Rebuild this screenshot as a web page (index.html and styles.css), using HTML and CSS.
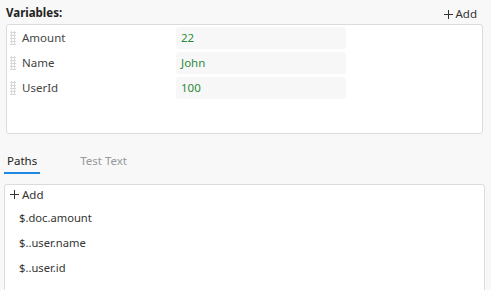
FILE: index.html
```html
<!DOCTYPE html>
<html>
<head>
<meta charset="utf-8">
<link rel="stylesheet" href="styles.css">
</head>
<body>
<div class="page">
  <div class="var-head">
    <span class="title">Variables:</span>
    <span class="add"><svg class="plus" viewBox="0 0 10 10" width="9" height="9"><path d="M5 0V10M0 5H10" stroke="#333" stroke-width="1.1" fill="none"/></svg>Add</span>
  </div>
  <div class="var-box">
    <div class="row">
      <span class="grip"></span>
      <span class="name">Amount</span>
      <span class="val">22</span>
    </div>
    <div class="row">
      <span class="grip"></span>
      <span class="name">Name</span>
      <span class="val">John</span>
    </div>
    <div class="row">
      <span class="grip"></span>
      <span class="name">UserId</span>
      <span class="val">100</span>
    </div>
  </div>
  <div class="tabs">
    <span class="tab active">Paths</span>
    <span class="tab">Test Text</span>
  </div>
  <div class="paths-box">
    <span class="add left"><svg class="plus" viewBox="0 0 10 10" width="9" height="9"><path d="M5 0V10M0 5H10" stroke="#333" stroke-width="1.1" fill="none"/></svg>Add</span>
    <div class="path first">$.doc.amount</div>
    <div class="path">$..user.name</div>
    <div class="path">$..user.id</div>
  </div>
</div>
</body>
</html>
```
FILE: styles.css
```css
html, body {
  margin: 0;
  padding: 0;
  background: #f8f8f8;
  height: 100%;
  overflow: hidden;
}
body {
  font-family: "Noto Sans", "Open Sans", sans-serif;
  font-size: 11.5px;
  color: #333;
}
.page {
  padding: 0 8px 0 6px;
}
.var-head {
  display: flex;
  justify-content: space-between;
  align-items: flex-end;
  height: 24px;
}
.title {
  font-weight: 700;
  color: #222;
  line-height: 14px;
  margin-bottom: 4px;
}
.add {
  display: inline-flex;
  align-items: center;
  gap: 3px;
  color: #333;
  margin-right: 6px;
  margin-bottom: 3px;
  line-height: 14px;
}
.plus { display: block; }
.var-box {
  height: 110px;
  background: #fff;
  border: 1px solid #dcdcdc;
  border-radius: 3px;
  box-sizing: border-box;
}
.row {
  display: flex;
  align-items: center;
  height: 25px;
}
.grip {
  width: 6px;
  height: 14px;
  margin-left: 3px;
  background-image: radial-gradient(circle, #d8d8d8 1px, transparent 1.2px);
  background-size: 3px 3px;
}
.name {
  width: 154px;
  padding-left: 6px;
  color: #444;
}
.val {
  width: 165px;
  height: 22px;
  line-height: 22px;
  padding-left: 5px;
  background: #f7f7f7;
  border-radius: 3px;
  color: #2b8a3e;
}
.tabs {
  display: flex;
  margin-top: 16px;
  margin-left: -2px;
  height: 34px;
  align-items: flex-start;
}
.tab {
  color: #999;
  padding: 4px 3px 0;
  height: 18px;
  line-height: 14px;
}
.tab.active {
  color: #222;
  border-bottom: 2px solid #1e88e5;
  margin-right: 37px;
}
.paths-box {
  margin-left: -2px;
  margin-right: -2px;
  height: 120px;
  background: #fff;
  border: 1px solid #dcdcdc;
  border-radius: 3px;
  box-sizing: border-box;
  padding: 2px 0 0 5px;
}
.add.left {
  margin: 0;
  height: 14px;
}
.path {
  height: 25px;
  line-height: 25px;
  padding-left: 9px;
  color: #333;
  font-size: 11.2px;
}
.path.first { margin-top: 3px; }
```
